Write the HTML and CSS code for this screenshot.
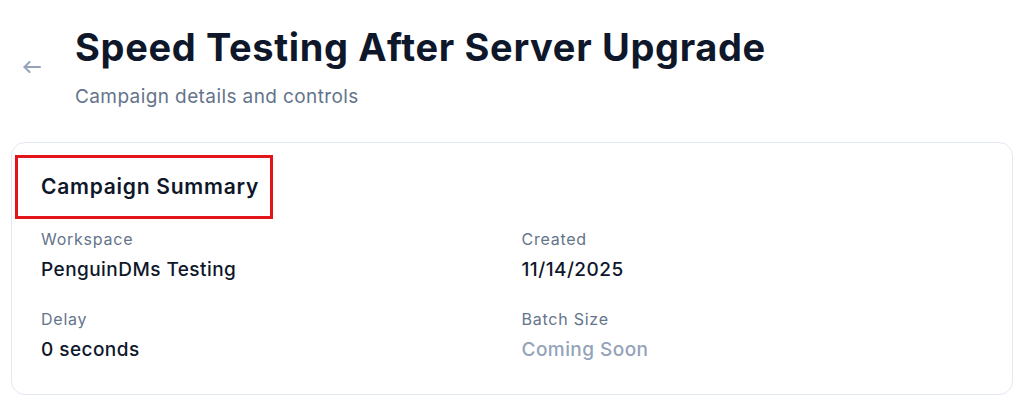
FILE: index.html
```html
<!DOCTYPE html>
<html>
<head>
<meta charset="utf-8">
<link rel="stylesheet" href="styles.css">
</head>
<body>
<div class="page">
  <header class="head">
    <button class="back" aria-label="Back">
      <svg width="18" height="12" viewBox="0 0 18 12" fill="none" stroke="currentColor" stroke-width="2" stroke-linecap="round" stroke-linejoin="round"><path d="M17 6H1.5"/><path d="M6.5 1L1.5 6l5 5"/></svg>
    </button>
    <div class="titles">
      <h1 class="title">Speed Testing After Server Upgrade</h1>
      <p class="subtitle">Campaign details and controls</p>
    </div>
  </header>
  <section class="card">
    <div class="card-head">
      <h2 class="card-title">Campaign Summary</h2>
    </div>
    <div class="grid">
      <div class="field"><div class="label">Workspace</div><div class="value">PenguinDMs Testing</div></div>
      <div class="field"><div class="label">Created</div><div class="value">11/14/2025</div></div>
      <div class="field"><div class="label">Delay</div><div class="value">0 seconds</div></div>
      <div class="field"><div class="label">Batch Size</div><div class="value muted">Coming Soon</div></div>
    </div>
  </section>
</div>
</body>
</html>
```

FILE: styles.css
```css
* { box-sizing: border-box; }
html, body { margin: 0; background: #fff; }
body { font-family: Inter, "Noto Sans", sans-serif; color: #0f172a; }
.page { padding: 22px 11px 0 11px; }
.head { display: flex; align-items: flex-start; gap: 34px; padding-left: 12px; }
.back { border: 0; background: none; padding: 0; color: #94a3b8; width: 18px; height: 12px; margin-top: 39px; display: flex; }
.titles { display: flex; flex-direction: column; }
.title { margin: 0; font-size: 38px; line-height: 50px; font-weight: 700; letter-spacing: 0.65px; color: #0f172a; }
.subtitle { margin: 11px 0 0; font-size: 19px; line-height: 28px; letter-spacing: 0.4px; color: #64748b; }
.card { margin-top: 31px; border: 1px solid #e2e8f0; border-radius: 14px; padding: 12px 30px 30px 3px; height: 253px; }
.card-head { display: inline-block; border: 3px solid #e3151a; padding: 14px 11px 14px 23px; }
.card-title { margin: 0; font-size: 21px; line-height: 30px; font-weight: 600; letter-spacing: 0.75px; color: #0f172a; }
.grid { display: grid; grid-template-columns: 1fr 1fr; column-gap: 20px; row-gap: 23px; padding-left: 26px; margin-top: 8px; }
.label { font-size: 16px; line-height: 24px; letter-spacing: 0.75px; color: #64748b; }
.value { margin-top: 5px; font-size: 19px; line-height: 28px; font-weight: 500; letter-spacing: 0.45px; color: #0f172a; }
.value.muted { color: #94a3b8; }
```
